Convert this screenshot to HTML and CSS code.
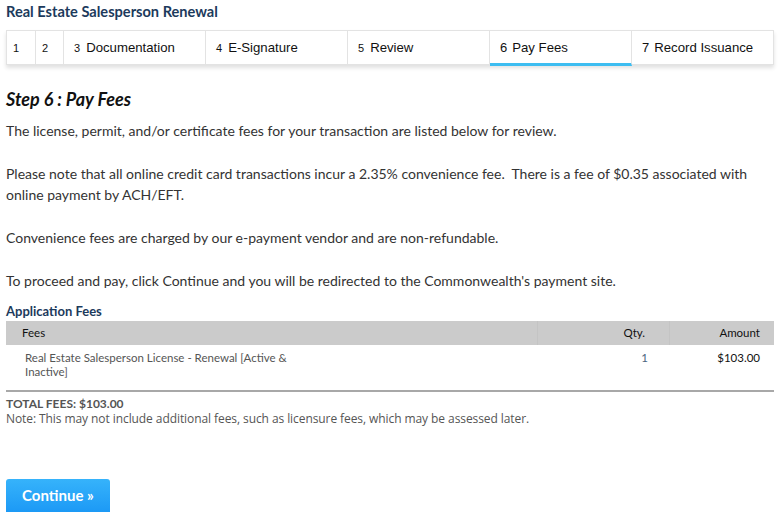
FILE: index.html
```html
<!DOCTYPE html>
<html>
<head>
<meta charset="utf-8">
<link rel="stylesheet" href="styles.css">
</head>
<body>
<div class="page">
  <h1 class="title">Real Estate Salesperson Renewal</h1>
  <div class="steps">
    <div class="step s-num"><span class="n">1</span></div>
    <div class="step s-num"><span class="n">2</span></div>
    <div class="step s-wide"><span class="n">3</span><span class="lbl">Documentation</span></div>
    <div class="step s-wide"><span class="n">4</span><span class="lbl">E-Signature</span></div>
    <div class="step s-wide"><span class="n">5</span><span class="lbl">Review</span></div>
    <div class="step s-wide active"><span class="n big">6</span><span class="lbl">Pay Fees</span></div>
    <div class="step s-wide"><span class="n big">7</span><span class="lbl">Record Issuance</span></div>
  </div>

  <h2 class="step-title">Step 6 : Pay Fees</h2>
  <p class="txt">The license, permit, and/or certificate fees for your transaction are listed below for review.</p>
  <p class="txt">Please note that all online credit card transactions incur a 2.35% convenience fee.&nbsp; There is a fee of $0.35 associated with online payment by ACH/EFT.</p>
  <p class="txt">Convenience fees are charged by our e-payment vendor and are non-refundable.</p>
  <p class="txt">To proceed and pay, click Continue and you will be redirected to the Commonwealth's payment site.</p>

  <h3 class="section">Application Fees</h3>
  <div class="fees">
    <div class="row head">
      <div class="c-fee">Fees</div>
      <div class="c-qty">Qty.</div>
      <div class="c-amt">Amount</div>
    </div>
    <div class="row item">
      <div class="c-fee"><span class="desc">Real Estate Salesperson License - Renewal [Active &amp; Inactive]</span></div>
      <div class="c-qty">1</div>
      <div class="c-amt">$103.00</div>
    </div>
  </div>
  <div class="total">TOTAL FEES: $103.00</div>
  <div class="note">Note: This may not include additional fees, such as licensure fees, which may be assessed later.</div>

  <div class="actions">
    <button class="btn">Continue »</button>
  </div>
</div>
</body>
</html>
```
FILE: styles.css
```css
html, body { margin: 0; padding: 0; background: #fff; }
body { font-family: Lato, "Open Sans", sans-serif; color: #333; }
.page { padding: 4px 4px 0 6px; }
.title { margin: 0; font-size: 14.6px; font-weight: 700; color: #1c3a5c; line-height: 16px; }
.steps {
  display: flex; margin-top: 10px; height: 33px;
  border: 1px solid #e3e3e3; box-shadow: 0 3px 4px rgba(0,0,0,0.12);
  font-family: "Liberation Sans", Arial, sans-serif; color: #111;
}
.step { display: flex; align-items: center; box-sizing: border-box; border-right: 1px solid #e3e3e3; padding-left: 6px; }
.step:last-child { border-right: 0; }
.s-num { width: 29px; }
.s-num:nth-child(2) { width: 28px; }
.s-wide { width: 142px; padding-left: 10px; }
.step:last-child { width: 141px; }
.n { font-size: 11px; margin-right: 6px; }
.n.big { font-size: 13px; margin-right: 5px; }
.lbl { font-size: 13.2px; }
.active { border-bottom: 3px solid #3dbdf1; margin-bottom: -2px; padding-top: 1px; }
.step-title { margin: 23px 0 0 0; font-size: 18px; font-style: italic; font-weight: 700; color: #111; line-height: 22px; }
.txt { margin: 10px 0 0 0; font-size: 14px; line-height: 21px; }
.txt + .txt { margin-top: 22px; }
.section { margin: 12px 0 2px 0; font-size: 13px; font-weight: 700; color: #1c3a5c; line-height: 16px; }
.fees { border-bottom: 2px solid #a8a8a8; }
.row { display: flex; }
.head { background: #cbcbcb; height: 24px; align-items: center; font-size: 11.5px; color: #111; }
.head > div { height: 24px; line-height: 24px; }
.c-fee { width: 531px; box-sizing: border-box; padding-left: 16px; }
.c-qty { width: 132px; box-sizing: border-box; text-align: right; padding-right: 24px; }
.c-amt { flex: 1; box-sizing: border-box; text-align: right; padding-right: 14px; }
.head .c-qty, .head .c-amt { border-left: 1px solid #c4c4c4; }
.item { font-size: 11.5px; color: #555; padding: 6px 0 11px; line-height: 14px; }
.item .c-fee { padding-left: 19px; }
.desc { display: block; width: 280px; }
.item .c-qty { color: #4a6580; padding-right: 21px; }
.item .c-amt { color: #111; }
.total { margin-top: 5px; font-size: 12px; font-weight: 700; color: #555; line-height: 14px; }
.note { margin-top: 1px; font-family: "Open Sans", sans-serif; font-size: 12px; letter-spacing: -0.08px; color: #555; line-height: 14px; }
.actions { margin-top: 53px; }
.btn {
  font-family: Lato, sans-serif; font-size: 15px; font-weight: 700; color: #fff;
  background: linear-gradient(#36b3fb, #1a97f5); border: 0; border-radius: 3px;
  width: 104px; height: 36px; padding: 0 0 4px; cursor: pointer;
}
```
